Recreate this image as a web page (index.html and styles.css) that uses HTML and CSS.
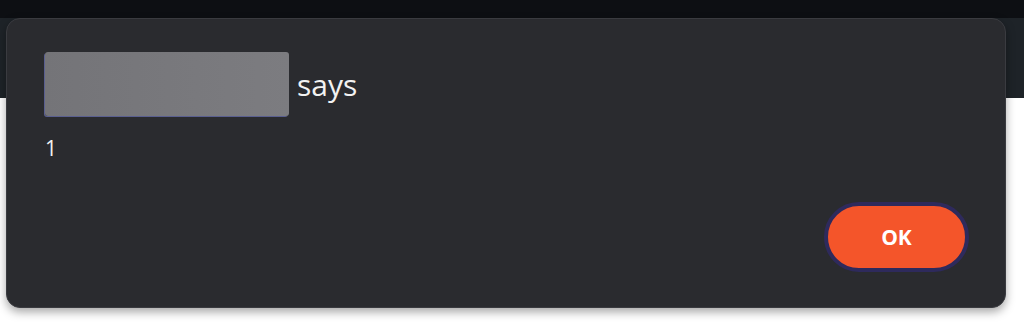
FILE: index.html
```html
<!DOCTYPE html>
<html lang="en">
<head>
    <meta charset="UTF-8">
    <title>Alert</title>
    <link rel="stylesheet" href="styles.css">
</head>
<body>
    <div class="page">
        <div class="topbar"></div>
        <div class="header"></div>
        <div class="content"></div>
    </div>

    <div class="dialog">
        <div class="dialog-title">
            <span class="redacted"></span>
            <span class="says">says</span>
        </div>
        <p class="dialog-message">1</p>
        <div class="dialog-actions">
            <button class="ok-button">OK</button>
        </div>
    </div>
</body>
</html>
```

FILE: styles.css
```css
body {
    font-family: "Open Sans", "Noto Sans", sans-serif;
    margin: 0;
    padding: 0;
    background-color: #fff;
    overflow: hidden;
}

.page {
    height: 333px;
    display: flex;
    flex-direction: column;
}

.topbar {
    height: 18px;
    background-color: #0d0f13;
}

.header {
    height: 80px;
    background-color: #1e2328;
}

.content {
    flex-grow: 1;
    background-color: #fff;
}

.dialog {
    position: absolute;
    left: 6px;
    top: 18px;
    width: 1000px;
    height: 290px;
    box-sizing: border-box;
    padding: 33px 36px 0 38px;
    background-color: #2a2b2f;
    border: 1px solid #3a3b40;
    border-radius: 14px;
    box-shadow: 0 4px 10px rgba(0, 0, 0, 0.35);
    display: flex;
    flex-direction: column;
}

.dialog-title {
    display: flex;
    align-items: center;
    height: 64px;
}

.redacted {
    width: 244px;
    height: 64px;
    background: linear-gradient(90deg, #747478, #7c7c80);
    border-radius: 3px;
    box-shadow: -1px 1px 0 #5a5f90;
}

.says {
    margin-left: 8px;
    margin-top: 0;
    font-size: 30px;
    color: #f2f2f2;
}

.dialog-message {
    margin: 18px 0 0 0;
    font-size: 21px;
    color: #f2f2f2;
}

.dialog-actions {
    display: flex;
    justify-content: flex-end;
    margin-top: 40px;
}

.ok-button {
    width: 145px;
    height: 70px;
    font-family: "Open Sans", "Noto Sans", sans-serif;
    font-size: 21px;
    font-weight: 700;
    color: #fff;
    background-color: #f4552a;
    border: 4px solid #2e2a5c;
    border-radius: 35px;
    cursor: pointer;
}
```
